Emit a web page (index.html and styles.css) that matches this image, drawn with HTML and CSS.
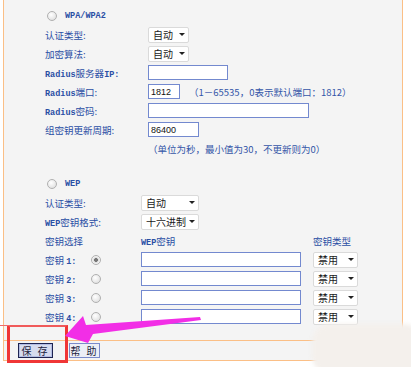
FILE: index.html
```html
<!DOCTYPE html>
<html lang="zh-CN">
<head>
    <meta charset="UTF-8">
    <title>无线安全设置</title>
    <link rel="stylesheet" href="styles.css">
</head>
<body>

<div class="frame">
    <div class="panel">
        <!-- WPA/WPA2 -->
        <div class="group wpa">
            <div class="row head">
                <input type="radio" name="mode" class="radio">
                <span class="en">WPA/WPA2</span>
            </div>
            <div class="row">
                <span class="label">认证类型:</span>
                <div class="sel sel-sm"><span>自动</span><i class="caret"></i></div>
            </div>
            <div class="row">
                <span class="label">加密算法:</span>
                <div class="sel sel-sm"><span>自动</span><i class="caret"></i></div>
            </div>
            <div class="row">
                <span class="label"><span class="en">Radius</span>服务器<span class="en">IP:</span></span>
                <input type="text" class="field w-ip">
            </div>
            <div class="row">
                <span class="label"><span class="en">Radius</span>端口:</span>
                <input type="text" class="field w-port" value="1812">
                <span class="hint hint-port">（1－65535，0表示默认端口：1812）</span>
            </div>
            <div class="row">
                <span class="label"><span class="en">Radius</span>密码:</span>
                <input type="text" class="field w-pwd">
            </div>
            <div class="row">
                <span class="label">组密钥更新周期:</span>
                <input type="text" class="field w-period" value="86400">
            </div>
            <div class="row">
                <span class="label"></span>
                <span class="hint">（单位为秒，最小值为30，不更新则为0）</span>
            </div>
        </div>

        <!-- WEP -->
        <div class="group wep">
            <div class="row head">
                <input type="radio" name="mode" class="radio">
                <span class="en">WEP</span>
            </div>
            <div class="row">
                <span class="label">认证类型:</span>
                <div class="sel sel-md"><span>自动</span><i class="caret"></i></div>
            </div>
            <div class="row">
                <span class="label"><span class="en">WEP</span>密钥格式:</span>
                <div class="sel sel-md"><span>十六进制</span><i class="caret"></i></div>
            </div>
            <div class="row">
                <span class="label">密钥选择</span>
                <span class="col-key"><span class="en">WEP</span>密钥</span>
                <span>密钥类型</span>
            </div>
            <div class="row">
                <span class="label keylabel"><span class="keyname">密钥 <span class="en">1:</span></span><input type="radio" name="key" class="radio" checked></span>
                <input type="text" class="field w-key">
                <div class="sel sel-type"><span>禁用</span><i class="caret"></i></div>
            </div>
            <div class="row">
                <span class="label keylabel"><span class="keyname">密钥 <span class="en">2:</span></span><input type="radio" name="key" class="radio"></span>
                <input type="text" class="field w-key">
                <div class="sel sel-type"><span>禁用</span><i class="caret"></i></div>
            </div>
            <div class="row">
                <span class="label keylabel"><span class="keyname">密钥 <span class="en">3:</span></span><input type="radio" name="key" class="radio"></span>
                <input type="text" class="field w-key">
                <div class="sel sel-type"><span>禁用</span><i class="caret"></i></div>
            </div>
            <div class="row">
                <span class="label keylabel"><span class="keyname">密钥 <span class="en">4:</span></span><input type="radio" name="key" class="radio"></span>
                <input type="text" class="field w-key">
                <div class="sel sel-type"><span>禁用</span><i class="caret"></i></div>
            </div>
        </div>
    </div>

    <div class="bar">
        <button class="btn btn-save">保 存</button>
        <button class="btn">帮 助</button>
    </div>

    <!-- 标注 -->
    <div class="redbox"></div>
    <svg class="arrow" width="411" height="367" viewBox="0 0 411 367">
        <polygon points="65,336 83,316 86,325 200,317 201,320 93,334 88,343" fill="#f22ee6"/>
    </svg>
    <div class="smudge"></div>
</div>

</body>
</html>
```

FILE: styles.css
```css
body {
    margin: 0;
    background: #fff;
    font-family: "Noto Sans CJK SC", "Liberation Sans", sans-serif;
}
.frame {
    position: relative;
    width: 411px;
    height: 367px;
    overflow: hidden;
}
.panel {
    margin-left: 3px;
    width: 400px;
    height: 341px;
    box-sizing: border-box;
    padding: 6px 0 0 41px;
    background: #f4f4f4;
    border-left: 1px solid #fbbf86;
    border-right: 1px solid #fbbf86;
    border-bottom: 1px solid #fbbf86;
}
.wep {
    margin-top: 16px;
}
.row {
    display: flex;
    align-items: center;
    height: 19px;
    font-size: 9.5px;
    color: #2a4ea4;
    white-space: nowrap;
}
.head .radio {
    margin-left: 2px;
    margin-right: 8px;
}
.en {
    font-family: "Liberation Mono", monospace;
    font-weight: bold;
    font-size: 8.5px;
}
.label {
    flex: none;
}
.wpa .label {
    width: 103px;
}
.wep .label {
    width: 96px;
}
.keylabel {
    display: flex;
    align-items: center;
}
.keyname {
    width: 46px;
}
.col-key {
    width: 172px;
}

/* 单选按钮 */
.radio {
    appearance: none;
    -webkit-appearance: none;
    width: 10px;
    height: 10px;
    margin: 0;
    border: 1px solid #b0b0b0;
    border-radius: 50%;
    background: radial-gradient(circle at 40% 35%, #ffffff, #d9d9d9);
    box-sizing: border-box;
}
.radio:checked {
    background: radial-gradient(circle, #777 0 1.6px, #dcdcdc 2.2px, #f2f2f2 3.5px);
}

/* 下拉框 */
.sel {
    flex: none;
    display: flex;
    align-items: center;
    justify-content: space-between;
    height: 16px;
    box-sizing: border-box;
    padding: 0 3px 0 4px;
    background: #fff;
    border: 1px solid #dadada;
    border-radius: 2px;
    font-size: 10px;
    color: #1a1a1a;
}
.sel-sm {
    width: 41px;
}
.sel-md {
    width: 58px;
}
.sel-type {
    width: 45px;
    margin-left: 12px;
}
.caret {
    width: 0;
    height: 0;
    border-left: 3px solid transparent;
    border-right: 3px solid transparent;
    border-top: 3px solid #222;
}

/* 输入框 */
.field {
    flex: none;
    height: 15px;
    box-sizing: border-box;
    margin: 0;
    padding: 0 2px;
    border: 1px solid #7389cf;
    background: #fff;
    font-family: "Liberation Sans", sans-serif;
    font-size: 9px;
    color: #111;
    outline: none;
}
.w-ip { width: 80px; }
.w-port { width: 32px; }
.w-pwd { width: 161px; }
.w-period { width: 51px; }
.w-key { width: 160px; }

.hint {
    color: #3456a8;
}
.hint-port {
    margin-left: 9px;
}

/* 底部按钮 */
.bar {
    margin-left: 3px;
    width: 400px;
    height: 20px;
    box-sizing: border-box;
    padding: 2px 0 0 14px;
    display: flex;
    gap: 16px;
    background: #f4f4f4;
    border-left: 1px solid #fbbf86;
    border-right: 1px solid #fbbf86;
    border-bottom: 1px solid #fbbf86;
}
.btn {
    height: 15px;
    width: 31px;
    padding: 0;
    box-sizing: border-box;
    background: #eceef6;
    border: 1px solid #7a8acb;
    font-family: "Noto Sans CJK SC", sans-serif;
    font-size: 10px;
    line-height: 12px;
    color: #1d1d40;
    letter-spacing: 2px;
}
.btn-save {
    width: 35px;
    background: #d6dbee;
    border-color: #1e2350;
    box-shadow: inset 0 0 0 1px #b3bde3;
}

/* 标注 */
.redbox {
    position: absolute;
    left: 7px;
    top: 325px;
    width: 61px;
    height: 38px;
    box-sizing: border-box;
    border: 3px solid #f03636;
    border-top: 2px solid #f05a5a;
}
.redbox::before {
    content: "";
    position: absolute;
    left: -10px;
    top: -2px;
    width: 10px;
    height: 1px;
    background: #f06a6a;
}
.arrow {
    position: absolute;
    left: 0;
    top: 0;
}
.smudge {
    position: absolute;
    left: 312px;
    top: 324px;
    width: 110px;
    height: 50px;
    background: #f4f0ec;
    border-radius: 18px;
    filter: blur(2px);
}
```
